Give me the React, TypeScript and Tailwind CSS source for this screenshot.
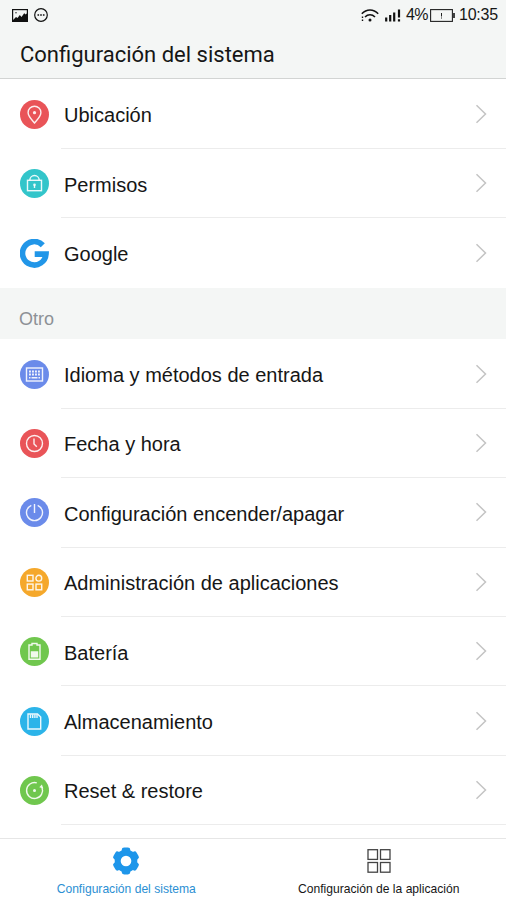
import React from 'react';

interface SettingItem {
  label: string;
  color: string;
  icon: React.ReactNode;
}

const deviceItems: SettingItem[] = [
  {
    label: 'Ubicación',
    color: 'bg-[#e95458]',
    icon: (
      <>
        <path d="M14.5 23C11.500 19.500 8.100 16.500 8.100 12.600a6.400 6.400 0 0 1 12.800 0c0 3.900-3.400 6.900-6.400 10.400z" />
        <circle cx="14.500" cy="12.700" r="1.600" fill="currentColor" stroke="none" />
      </>
    ),
  },
  {
    label: 'Permisos',
    color: 'bg-[#33c5ca]',
    icon: (
      <>
        <rect x="7.500" y="11.300" width="14" height="10.400" />
        <path d="M9.800 11.300a4.700 4.800 0 0 1 9.400 0M14.500 16v3" />
        <circle cx="14.500" cy="15.700" r="1.300" fill="currentColor" stroke="none" />
      </>
    ),
  },
  { label: 'Google', color: 'bg-white', icon: null },
];

const otherItems: SettingItem[] = [
  {
    label: 'Idioma y métodos de entrada',
    color: 'bg-[#6b8bea]',
    icon: (
      <>
        <rect x="6.500" y="8" width="16" height="13" />
        <path d="M9 11.500h11M9 14.500h11" strokeWidth="1.900" strokeDasharray="1.900 1.100" />
        <path d="M9 17.800h1.500M11.500 17.800h6M18.500 17.800H20" strokeWidth="1.600" />
      </>
    ),
  },
  {
    label: 'Fecha y hora',
    color: 'bg-[#e95458]',
    icon: (
      <>
        <circle cx="14.500" cy="14.500" r="8" />
        <path d="M14 9.500v5.500l2.800 2.800" />
      </>
    ),
  },
  {
    label: 'Configuración encender/apagar',
    color: 'bg-[#6b8bea]',
    icon: <path d="M11.300 7.300a8 8 0 1 0 6.400 0M14.500 6v9" />,
  },
  {
    label: 'Administración de aplicaciones',
    color: 'bg-[#f5a82b]',
    icon: (
      <>
        <rect x="7.300" y="7.300" width="5.700" height="5.700" />
        <circle cx="18.800" cy="10.200" r="2.900" />
        <rect x="7.300" y="16.100" width="5.700" height="5.700" />
        <rect x="16" y="16.100" width="5.700" height="5.700" />
      </>
    ),
  },
  {
    label: 'Batería',
    color: 'bg-[#70c74e]',
    icon: (
      <>
        <path d="M12 8V6.500h5V8h3v14.200h-11V8z" />
        <path d="M10.800 14.300h7.400v6.300h-7.400z" fill="currentColor" stroke="none" />
      </>
    ),
  },
  {
    label: 'Almacenamiento',
    color: 'bg-[#2cb4e9]',
    icon: (
      <>
        <path d="M8 7h9.500l3.200 3v12H8z" />
        <path d="M10.500 7.500v3.500M12.700 7.500v3.500M14.900 7.500v3.500M17 7.500v3.500" />
      </>
    ),
  },
  {
    label: 'Reset & restore',
    color: 'bg-[#70c74e]',
    icon: (
      <>
        <path d="M16.800 6.800a8 8 0 1 0 5.200 4.700" />
        <path d="M23.300 12.500l-4-1.200 2.600-2.800z" fill="currentColor" stroke="none" />
        <circle cx="14.500" cy="14.500" r="1.500" fill="currentColor" stroke="none" />
      </>
    ),
  },
];

const GoogleLogo = () => (
  <svg viewBox="0 0 29 29" className="h-[29px] w-[29px]">
    <path
      d="M22.800 6.200A11.750 11.750 0 1 0 26 15.100H14.700"
      fill="none"
      stroke="#2196e8"
      strokeWidth="5.600"
    />
  </svg>
);

const SettingRow = ({ item, last = false }: { item: SettingItem; last?: boolean }) => (
  <div className="flex h-[69.400px] items-stretch pl-5">
    <div className="flex w-[41px] items-center">
      {item.icon ? (
        <div className={`h-[29px] w-[29px] rounded-full text-white/90 ${item.color}`}>
          <svg viewBox="0 0 29 29" fill="none" stroke="currentColor" strokeWidth="1.400" className="h-[29px] w-[29px]">
            {item.icon}
          </svg>
        </div>
      ) : (
        <GoogleLogo />
      )}
    </div>
    <div
      className={`flex flex-1 items-center justify-between border-b pl-[3px] pr-[19px] ${
        last ? 'border-transparent' : 'border-[#ececec]'
      }`}
    >
      <span className="whitespace-nowrap pt-[3px] text-[20px] leading-6">{item.label}</span>
      <svg viewBox="0 0 12 20" className="h-5 w-3" fill="none" stroke="#c4c4c4" strokeWidth="1.500">
        <path d="M1.500 1.300L10.500 10l-9 8.700" />
      </svg>
    </div>
  </div>
);

const StatusBar = () => (
  <div className="flex h-[30px] items-center justify-between pl-3 pr-2">
    <div className="flex items-center gap-[6px]">
      <svg viewBox="0 0 16 13" className="h-[13px] w-4">
        <rect x=".6" y=".6" width="14.800" height="11.800" fill="none" stroke="#111" strokeWidth="1.200" />
        <path d="M1 12v-1l3-3 1.500 1 2.300-3L9.500 8 12 4.500h1V5.500l2-1v8H1z" fill="#111" />
        <circle cx="4" cy="3.800" r=".7" fill="#111" />
      </svg>
      <svg viewBox="0 0 14 14" className="h-3.5 w-3.5">
        <circle cx="7" cy="7" r="6.300" fill="none" stroke="#111" strokeWidth="1.200" />
        <path d="M3.500 7h1.600M6.200 7h1.600M8.900 7h1.600" stroke="#111" strokeWidth="1.300" />
      </svg>
    </div>
    <div className="flex items-center">
      <svg viewBox="0 0 18 13" className="mr-[6px] h-[13px] w-[18px]" fill="none" stroke="#111" strokeWidth="1.600">
        <path d="M.8 4.800C5.500-.2 12.500-.2 17.200 4.800M4 8c3-3 7-3 10 0" />
        <circle cx="9" cy="11" r="1.500" fill="#111" stroke="none" />
        <path d="M1.500 7.500V9M1.500 10.500V12" strokeWidth="1.400" />
      </svg>
      <svg viewBox="0 0 16 13" className="mr-[5px] h-[13px] w-4" stroke="#111" strokeWidth="2.200">
        <path d="M1.200 8.500V12.500M5.200 6v6.500M9.200 3.500v9M14 .5v8M14 10.200v2.300" />
      </svg>
      <span className="w-[24px] whitespace-nowrap text-[16px] leading-5 tracking-[-0.600px]">4%</span>
      <svg viewBox="0 0 25 13" className="mr-[4px] h-[13px] w-[25px]" fill="none" stroke="#222" strokeWidth="1.100">
        <rect x=".6" y=".6" width="21.800" height="11.800" />
        <path d="M24 4v5" strokeWidth="1.700" />
        <path d="M11.500 4v3.500M11.500 8.500V9.500" strokeWidth="1" />
      </svg>
      <span className="text-[16px] leading-5 tracking-[-0.200px]">10:35</span>
    </div>
  </div>
);

export default function App() {
  return (
    <div className="flex h-[900px] w-[506px] flex-col overflow-hidden bg-white font-['Liberation_Sans',Arial,sans-serif] text-[#161616]">
      <header className="h-[79px] border-b border-[#d2d4d3] bg-[#f4f6f5]">
        <StatusBar />
        <h1 className="pl-5 pt-[11px] font-[Roboto,sans-serif] text-[22px] leading-7">Configuración del sistema</h1>
      </header>

      <main className="min-h-0 flex-1 overflow-hidden pt-[0.600px]">
        {deviceItems.map((item, index) => (
          <SettingRow key={item.label} item={item} last={index === deviceItems.length - 1} />
        ))}
        <h2 className="h-[51.600px] bg-[#f4f6f5] pl-[19px] pt-[19px] text-[18px] leading-6 text-[#8d9196]">Otro</h2>
        {otherItems.map((item) => (
          <SettingRow key={item.label} item={item} />
        ))}
      </main>

      {/* Bottom tabs */}
      <nav className="grid h-[62px] grid-cols-2 border-t border-[#e6e6e6] pr-px text-[12.100px] leading-4">
        <button className="flex flex-col items-center pt-[8px] text-[#2b8fd3]">
          <svg viewBox="0 0 28 28" className="h-7 w-7" fill="#1e96ea">
            <circle cx="14" cy="14" r="11.300" />
            <rect x="9.700" y=".6" width="8.600" height="26.800" rx="2.400" />
            <rect x="9.700" y=".6" width="8.600" height="26.800" rx="2.400" transform="rotate(60 14 14)" />
            <rect x="9.700" y=".6" width="8.600" height="26.800" rx="2.400" transform="rotate(120 14 14)" />
            <circle cx="14" cy="14" r="5.300" fill="#fff" />
          </svg>
          <span className="mt-[6px] whitespace-nowrap">Configuración del sistema</span>
        </button>
        <button className="flex flex-col items-center pt-[8px]">
          <svg viewBox="0 0 28 28" className="h-7 w-7" fill="none" stroke="#444" strokeWidth="1.300">
            <rect x="3" y="2.700" width="9.500" height="9.700" />
            <rect x="15.500" y="2.700" width="9.500" height="9.700" />
            <rect x="3" y="15.500" width="9.500" height="9.700" />
            <rect x="15.500" y="15.500" width="9.500" height="9.700" />
          </svg>
          <span className="mt-[6px] whitespace-nowrap">Configuración de la aplicación</span>
        </button>
      </nav>
    </div>
  );
}
